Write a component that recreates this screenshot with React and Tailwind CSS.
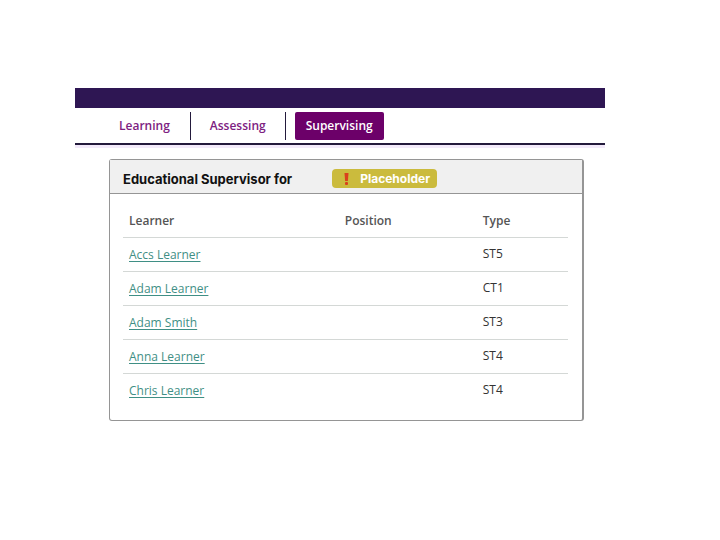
const learners = [
  { name: 'Accs Learner', position: '', type: 'ST5' },
  { name: 'Adam Learner', position: '', type: 'CT1' },
  { name: 'Adam Smith', position: '', type: 'ST3' },
  { name: 'Anna Learner', position: '', type: 'ST4' },
  { name: 'Chris Learner', position: '', type: 'ST4' },
];

function Nav() {
  return (
    <nav className="border-b-2 border-[#231a3c] pt-1 pb-[3px] pl-6">
      <ul className="flex h-7 items-stretch text-[12px] font-semibold text-[#7d2181]">
        <li className="flex border-r border-[#231a3c] px-5">
          <a href="#learning" className="flex items-center">Learning</a>
        </li>
        <li className="mr-[9px] flex border-r border-[#231a3c] px-[19px]">
          <a href="#assessing" className="flex items-center">Assessing</a>
        </li>
        <li className="flex">
          <a href="#supervising" aria-current="page" className="flex items-center rounded-xs bg-[#6c0069] px-[11px] text-white">
            Supervising
          </a>
        </li>
      </ul>
    </nav>
  );
}

function SupervisorCard() {
  return (
    <section className="mt-[11px] mr-[21px] ml-[34px] rounded-[3px] border border-r-2 border-[#959595] bg-white">
      <header className="flex h-[34px] items-center gap-10 border-b border-[#959595] bg-[#f0f0f0] pt-1 pl-[13px]">
        <h1 className="font-['Inter',sans-serif] text-[13px] leading-5 font-bold text-[#111111]">Educational Supervisor for</h1>
        <span className="flex h-[19px] items-center gap-[11px] rounded-[4px] bg-[#cbbb3d] pr-[7px] pl-3 font-['Inter',sans-serif] text-[12px] font-bold text-white">
          <svg viewBox="0 0 5 12" className="h-3 w-[5px]" fill="#d9401c" aria-hidden="true">
            <path d="M.5 0h4L3.9 8H1.1z" />
            <rect x="1" y="9" width="3" height="3" rx="1" />
          </svg>
          Placeholder
        </span>
      </header>
      <div className="pt-[9px] pr-[14px] pb-[13px] pl-[13px]">
        <table className="w-full table-fixed text-left text-[12px] leading-4">
          <colgroup>
            <col className="w-[48.5%]" />
            <col className="w-[31%]" />
            <col />
          </colgroup>
          <thead>
            <tr className="h-[34px] border-b border-[#d4d8d6] text-[#555555]">
              <th className="px-[6px] pt-[2px] font-semibold">Learner</th>
              <th className="px-[6px] pt-[2px] font-semibold">Position</th>
              <th className="px-[6px] pt-[2px] font-semibold">Type</th>
            </tr>
          </thead>
          <tbody>
            {learners.map((l) => (
              <tr key={l.name} className="h-[34px] border-b border-[#d4d8d6] last:border-b-0">
                <td className="px-[6px] pt-[2px]">
                  <a href="#learner" className="font-medium text-[#3f8f85] underline underline-offset-2">{l.name}</a>
                </td>
                <td className="px-[6px]">{l.position}</td>
                <td className="px-[6px] font-medium text-[#333333]">{l.type}</td>
              </tr>
            ))}
          </tbody>
        </table>
      </div>
    </section>
  );
}

export default function App() {
  return (
    <div className="min-h-screen bg-white pt-22 pr-[115px] pb-10 pl-[75px] font-['Open_Sans',sans-serif]">
      <div className="h-5 bg-[#2e1653]" />
      <Nav />
      <div className="h-[3px] bg-[#f3eafa]" />
      <SupervisorCard />
    </div>
  );
}
